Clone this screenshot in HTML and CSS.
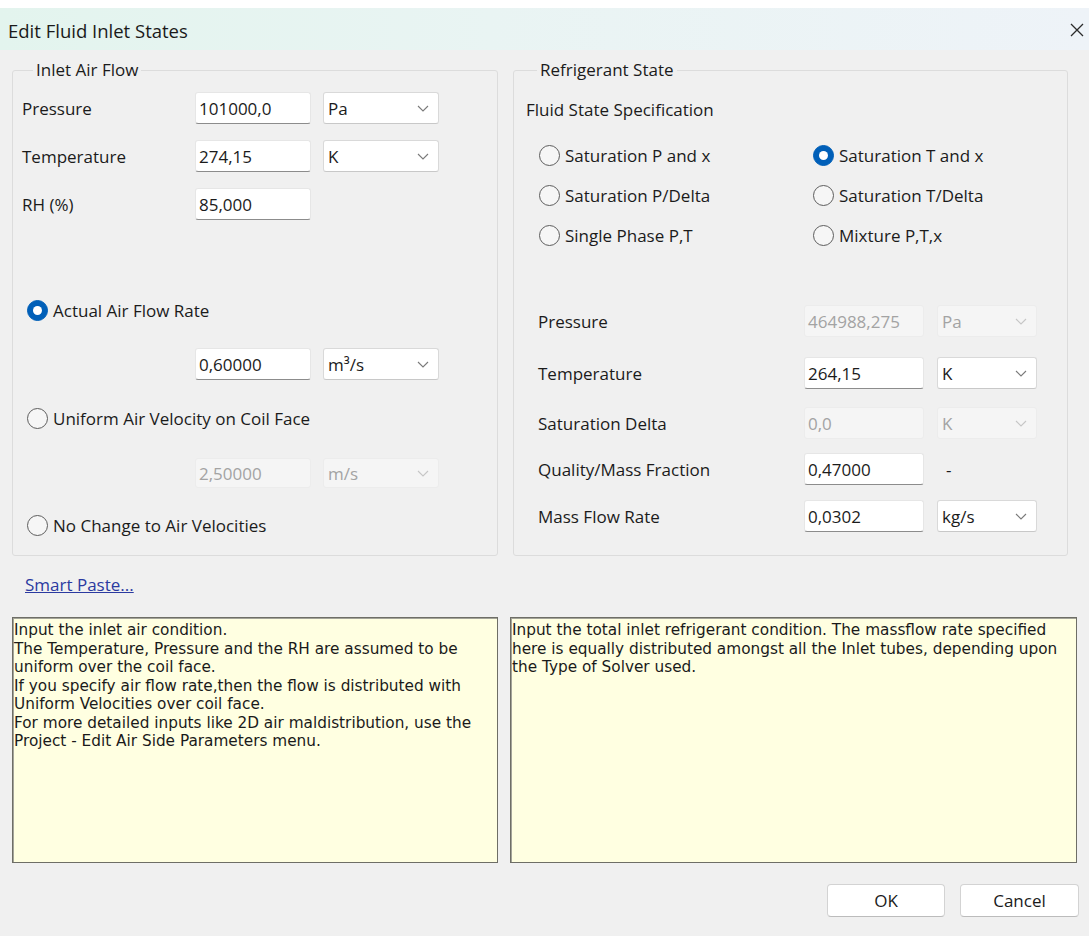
FILE: index.html
```html
<!DOCTYPE html>
<html lang="en">
<head>
<meta charset="utf-8">
<title>Edit Fluid Inlet States</title>
<link rel="stylesheet" href="styles.css">
</head>
<body>
<div class="window">
  <header class="titlebar">
    <span class="title">Edit Fluid Inlet States</span>
    <svg class="close" width="14" height="14" viewBox="0 0 14 14" aria-label="Close">
      <path d="M1 1 L13 13 M13 1 L1 13" stroke="#2b2b2b" stroke-width="1.3" fill="none"/>
    </svg>
  </header>

  <main class="content">
    <div class="groups">
      <fieldset class="group group-air">
        <legend>Inlet Air Flow</legend>

        <div class="row air-row first">
          <span class="label air-label">Pressure</span>
          <span class="edit">101000,0</span>
          <span class="combo">Pa<svg class="chev" viewBox="0 0 12 7"><path d="M1 1 L6 6 L11 1"/></svg></span>
        </div>
        <div class="row air-row gap16">
          <span class="label air-label">Temperature</span>
          <span class="edit">274,15</span>
          <span class="combo">K<svg class="chev" viewBox="0 0 12 7"><path d="M1 1 L6 6 L11 1"/></svg></span>
        </div>
        <div class="row air-row gap16">
          <span class="label air-label">RH (%)</span>
          <span class="edit">85,000</span>
        </div>

        <div class="radio-row air-radio gap78">
          <span class="radio checked"></span><span class="radio-text">Actual Air Flow Rate</span>
        </div>
        <div class="row air-row gap26">
          <span class="label air-label"></span>
          <span class="edit">0,60000</span>
          <span class="combo">m³/s<svg class="chev" viewBox="0 0 12 7"><path d="M1 1 L6 6 L11 1"/></svg></span>
        </div>

        <div class="radio-row air-radio gap26">
          <span class="radio"></span><span class="radio-text">Uniform Air Velocity on Coil Face</span>
        </div>
        <div class="row air-row gap28 short">
          <span class="label air-label"></span>
          <span class="edit disabled">2,50000</span>
          <span class="combo disabled">m/s<svg class="chev" viewBox="0 0 12 7"><path d="M1 1 L6 6 L11 1"/></svg></span>
        </div>

        <div class="radio-row air-radio gap25">
          <span class="radio"></span><span class="radio-text">No Change to Air Velocities</span>
        </div>
      </fieldset>

      <fieldset class="group group-ref">
        <legend>Refrigerant State</legend>
        <div class="spec-title">Fluid State Specification</div>

        <div class="state-grid">
          <div class="radio-row"><span class="radio"></span><span class="radio-text">Saturation P and x</span></div>
          <div class="radio-row"><span class="radio checked"></span><span class="radio-text">Saturation T and x</span></div>
          <div class="radio-row"><span class="radio"></span><span class="radio-text">Saturation P/Delta</span></div>
          <div class="radio-row"><span class="radio"></span><span class="radio-text">Saturation T/Delta</span></div>
          <div class="radio-row"><span class="radio"></span><span class="radio-text">Single Phase P,T</span></div>
          <div class="radio-row"><span class="radio"></span><span class="radio-text">Mixture P,T,x</span></div>
        </div>

        <div class="row ref-row gap58">
          <span class="label ref-label">Pressure</span>
          <span class="edit ref-edit disabled">464988,275</span>
          <span class="combo ref-combo disabled">Pa<svg class="chev" viewBox="0 0 12 7"><path d="M1 1 L6 6 L11 1"/></svg></span>
        </div>
        <div class="row ref-row gap20">
          <span class="label ref-label">Temperature</span>
          <span class="edit ref-edit">264,15</span>
          <span class="combo ref-combo">K<svg class="chev" viewBox="0 0 12 7"><path d="M1 1 L6 6 L11 1"/></svg></span>
        </div>
        <div class="row ref-row gap18">
          <span class="label ref-label">Saturation Delta</span>
          <span class="edit ref-edit disabled">0,0</span>
          <span class="combo ref-combo disabled">K<svg class="chev" viewBox="0 0 12 7"><path d="M1 1 L6 6 L11 1"/></svg></span>
        </div>
        <div class="row ref-row gap14">
          <span class="label ref-label">Quality/Mass Fraction</span>
          <span class="edit ref-edit">0,47000</span>
          <span class="unit-text">-</span>
        </div>
        <div class="row ref-row gap15">
          <span class="label ref-label">Mass Flow Rate</span>
          <span class="edit ref-edit">0,0302</span>
          <span class="combo ref-combo">kg/s<svg class="chev" viewBox="0 0 12 7"><path d="M1 1 L6 6 L11 1"/></svg></span>
        </div>
      </fieldset>
    </div>

    <a class="link" href="#">Smart Paste...</a>

    <div class="notes">
      <div class="note note-air">Input the inlet air condition.<br>The Temperature, Pressure and the RH are assumed to be<br>uniform over the coil face.<br>If you specify air flow rate,then the flow is distributed with<br>Uniform Velocities over coil face.<br>For more detailed inputs like 2D air maldistribution, use the<br>Project - Edit Air Side Parameters menu.</div>
      <div class="note note-ref">Input the total inlet refrigerant condition. The massflow rate specified<br>here is equally distributed amongst all the Inlet tubes, depending upon<br>the Type of Solver used.</div>
    </div>

    <div class="buttons">
      <button class="btn btn-ok">OK</button>
      <button class="btn btn-cancel">Cancel</button>
    </div>
  </main>
</div>
</body>
</html>
```

FILE: styles.css
```css
* { box-sizing: border-box; }

html, body {
  margin: 0;
  padding: 0;
  background: #f0f0f0;
}

body {
  font-family: "Open Sans", "Noto Sans", sans-serif;
  font-size: 17px;
  color: #1b1b1b;
}

.window {
  width: 1089px;
  height: 936px;
  background: #f0f0f0;
  overflow: hidden;
}

/* Title bar */
.titlebar {
  height: 50px;
  border-top: 8px solid #ffffff;
  background: linear-gradient(90deg, #e3f4ee 0%, #e9f4f3 45%, #eef3f8 100%);
  display: flex;
  align-items: center;
  justify-content: space-between;
  padding: 2px 5px 0 8px;
}

.title {
  font-size: 18.5px;
  color: #1a1a1a;
}

.close {
  width: 14px;
  height: 14px;
}

/* Main area */
.content {
  padding-left: 12px;
  display: flex;
  flex-direction: column;
}

.groups {
  display: flex;
  gap: 15px;
  margin-top: 10px;
}

.group {
  margin: 0;
  padding: 0;
  min-width: 0;
  height: 496px;
  border: 1px solid #dcdcdc;
  border-radius: 3px;
}

.group legend {
  font-size: 17px;
  line-height: 20px;
  padding: 0 3px;
  margin-left: 11px;
  color: #1b1b1b;
}

.group-air {
  width: 486px;
  padding-left: 9px;
}

.group-ref {
  width: 555px;
  padding-left: 12px;
}

/* Field rows */
.row {
  display: flex;
  align-items: center;
  height: 32px;
}

.row.short { height: 30px; }

.label {
  flex: none;
  font-size: 17px;
}

.air-label { width: 173px; }
.ref-label { width: 266px; margin-left: 12px; }

.edit {
  flex: none;
  width: 116px;
  height: 100%;
  background: #ffffff;
  border: 1px solid #e6e6e6;
  border-bottom: 1px solid #8c8c8c;
  border-radius: 3px;
  padding-left: 3px;
  display: flex;
  align-items: center;
  font-size: 17px;
}

.combo {
  flex: none;
  width: 116px;
  height: 100%;
  margin-left: 12px;
  background: #ffffff;
  border: 1px solid #d9d9d9;
  border-bottom-color: #c8c8c8;
  border-radius: 3px;
  padding: 0 9px 0 4px;
  display: flex;
  align-items: center;
  justify-content: space-between;
  font-size: 17px;
}

.chev {
  width: 12px;
  height: 7px;
}

.chev path {
  fill: none;
  stroke: #7a7a7a;
  stroke-width: 1.1;
}

.edit.disabled,
.combo.disabled {
  background: #f5f5f5;
  border-color: #ececec;
  color: #a3a3a3;
}

.combo.disabled .chev path { stroke: #c6c6c6; }

.ref-edit { width: 120px; }
.ref-combo { width: 100px; margin-left: 13px; }

.unit-text {
  margin-left: 22px;
  font-size: 17px;
}

/* Vertical rhythm of the rows */
.first { margin-top: 12px; }
.gap14 { margin-top: 14px; }
.gap15 { margin-top: 15px; }
.gap16 { margin-top: 16px; }
.gap18 { margin-top: 18px; }
.gap20 { margin-top: 20px; }
.gap25 { margin-top: 25px; }
.gap26 { margin-top: 26px; }
.gap28 { margin-top: 28px; }
.gap58 { margin-top: 58px; }
.gap78 { margin-top: 78px; }

/* Radio buttons */
.radio-row {
  display: flex;
  align-items: center;
  height: 24px;
}

.air-radio { padding-left: 5px; }

.radio {
  flex: none;
  width: 21px;
  height: 21px;
  border-radius: 50%;
  border: 1px solid #5d5d5d;
  background: #f6f6f6;
  margin-right: 5px;
  position: relative;
}

.radio.checked {
  background: #005fb8;
  border-color: #005fb8;
}

.radio.checked::after {
  content: "";
  position: absolute;
  left: 5px;
  top: 5px;
  width: 9px;
  height: 9px;
  border-radius: 50%;
  background: #ffffff;
}

.radio-text { font-size: 17px; }

.spec-title {
  margin-top: 20px;
  line-height: 20px;
  font-size: 17px;
}

.state-grid {
  display: grid;
  grid-template-columns: 274px auto;
  row-gap: 16px;
  margin-top: 23px;
  padding-left: 13px;
}

/* Link */
.link {
  align-self: flex-start;
  margin-top: 19px;
  margin-left: 13px;
  line-height: 20px;
  font-size: 17px;
  color: #2b3aa0;
  text-decoration: underline;
}

/* Description boxes */
.notes {
  display: flex;
  gap: 12px;
  margin-top: 22px;
}

.note {
  height: 246px;
  background: #ffffe1;
  border: 1px solid #6e6e66;
  box-shadow: inset 1px 1px 0 #a4a49a;
  padding: 3px 1px;
  font-family: "DejaVu Sans", sans-serif;
  font-size: 15.3px;
  line-height: 18.5px;
  color: #1a1a1a;
  white-space: nowrap;
  overflow: hidden;
}

.note-air { width: 486px; }
.note-ref { width: 567px; }

/* Dialog buttons */
.buttons {
  display: flex;
  justify-content: flex-end;
  gap: 15px;
  margin-top: 21px;
  padding-right: 10px;
}

.btn {
  height: 33px;
  background: #ffffff;
  border: 1px solid #d3d3d3;
  border-bottom-color: #bcbcbc;
  border-radius: 4px;
  font-family: "Open Sans", "Noto Sans", sans-serif;
  font-size: 17px;
  color: #1b1b1b;
  padding: 0;
}

.btn-ok { width: 118px; }
.btn-cancel { width: 119px; }
```
